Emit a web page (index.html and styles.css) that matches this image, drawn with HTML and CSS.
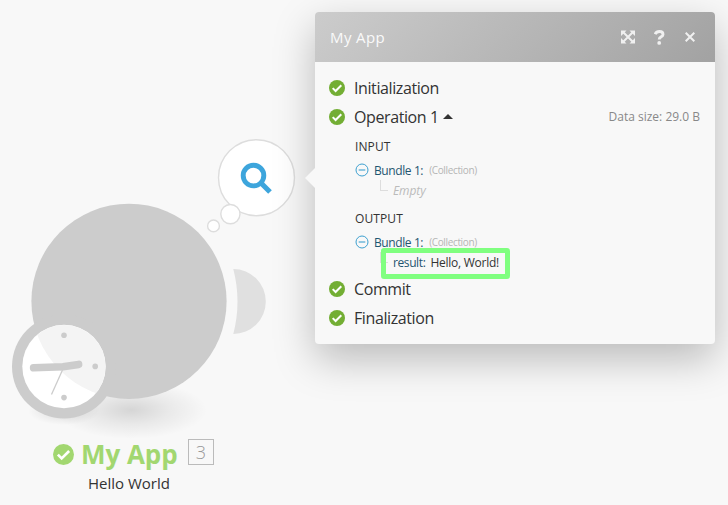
FILE: index.html
```html
<!DOCTYPE html>
<html lang="en">
<head>
<meta charset="utf-8">
<title>My App</title>
<link rel="stylesheet" href="styles.css">
</head>
<body>
<svg class="defs" width="0" height="0" aria-hidden="true">
  <symbol id="check" viewBox="0 0 16 16">
    <circle cx="8" cy="8" r="8" fill="currentColor"/>
    <path d="M3.7 8.1l2.9 2.9 5.7-5.7" fill="none" stroke="#fff" stroke-width="2"/>
  </symbol>
  <symbol id="minus" viewBox="0 0 14 14">
    <circle cx="7" cy="7" r="6" fill="none" stroke="currentColor"/>
    <path d="M3.7 7h6.6" stroke="currentColor" stroke-width="1.1"/>
  </symbol>
</svg>
<main class="canvas">
  <svg class="module" width="315" height="505" viewBox="0 0 315 505">
    <defs>
      <radialGradient id="shade"><stop offset="0" stop-color="#000" stop-opacity=".14"/><stop offset=".5" stop-color="#000" stop-opacity=".06"/><stop offset="1" stop-color="#000" stop-opacity="0"/></radialGradient>
      <clipPath id="face"><circle cx="64" cy="366.5" r="41.5"/></clipPath>
    </defs>
    <ellipse cx="131" cy="410" rx="76" ry="29" fill="url(#shade)"/>
    <ellipse cx="64" cy="411" rx="36" ry="14" fill="url(#shade)"/>
    <path d="M233.3 269A32.5 32.5 0 1 1 233.3 334A130 130 0 0 0 233.3 269Z" fill="#e0e0e0"/>
    <circle cx="129" cy="301.3" r="97.6" fill="#ccc"/>
    <circle cx="64" cy="366.5" r="52" fill="#ccc"/>
    <circle cx="64" cy="366.5" r="41.7" fill="#fff"/>
    <circle cx="129" cy="301.3" r="97.6" fill="#f4f4f4" clip-path="url(#face)"/>
    <g fill="#ccc"><circle cx="64" cy="335.2" r="2.8"/><circle cx="95.2" cy="366.4" r="2.8"/><circle cx="64" cy="397.6" r="2.8"/></g>
    <path d="M33.6 367.8L63 366.7L78.6 364.4" fill="none" stroke="#ccc" stroke-width="7.6" stroke-linecap="round" stroke-linejoin="round"/>
    <path d="M62.5 370L51.5 394.5" stroke="#ccc" stroke-width="1.3"/>
  </svg>
  <svg class="bubble" width="90" height="100" viewBox="206 136 90 100">
    <g fill="#fff" stroke="#ddd" stroke-width="1.4"><circle cx="256.5" cy="177.7" r="38"/><circle cx="230.4" cy="214.1" r="9.6"/><circle cx="213.5" cy="225.9" r="5.9"/></g>
    <circle cx="253.5" cy="175.6" r="10.3" fill="none" stroke="#3da5dc" stroke-width="4.9"/>
    <path d="M261.5 183.5L270 192" stroke="#3da5dc" stroke-width="5.2"/>
  </svg>
  <div class="caption">
    <div class="name"><svg class="name-check"><use href="#check"/></svg><span class="name-text">My App</span><span class="count">3</span></div>
    <div class="subtitle">Hello World</div>
  </div>
  <section class="panel">
    <header class="panel-head">
      <h1 class="title">My App</h1>
      <svg class="tool" width="14" height="14" viewBox="0 0 14 14" fill="#f0f0f0"><path d="M0 .5h5.5L0 6zM14 .5v5.5L8.5 .5zM0 13.5V8L5.5 13.5zM14 13.5H8.5L14 8z"/><path d="M2 2l10 10M12 2L2 12" stroke="#f0f0f0" stroke-width="2"/></svg>
      <svg class="tool help" width="11" height="15" viewBox="0 0 11 15"><path d="M1.2 4.2C2 2.2 3.5 1.5 5.4 1.5C7.8 1.5 9 2.8 9 4.4C9 7 5.2 6.6 5.2 9.6" fill="none" stroke="#f0f0f0" stroke-width="2.9"/><circle cx="5.2" cy="12.9" r="1.9" fill="#f0f0f0"/></svg>
      <svg class="tool" width="10" height="10" viewBox="0 0 10 10"><path d="M.7.7l8.6 8.6M9.3.7L.7 9.3" stroke="#f0f0f0" stroke-width="2"/></svg>
    </header>
    <div class="log">
      <div class="step"><svg class="ok"><use href="#check"/></svg><span class="step-name">Initialization</span></div>
      <div class="step"><svg class="ok"><use href="#check"/></svg><span class="step-name">Operation 1</span><i class="caret"></i><span class="size">Data size: 29.0 B</span></div>
      <div class="io">
        <h2 class="label">INPUT</h2>
        <div class="bundle"><svg class="toggle"><use href="#minus"/></svg><span class="key">Bundle 1:</span><span class="type">(Collection)</span></div>
        <div class="leaf"><em class="empty">Empty</em></div>
        <h2 class="label output">OUTPUT</h2>
        <div class="bundle"><svg class="toggle"><use href="#minus"/></svg><span class="key">Bundle 1:</span><span class="type">(Collection)</span></div>
        <div class="leaf"><span class="result">result:</span><span class="value">Hello, World!</span><div class="highlight"></div></div>
      </div>
      <div class="step"><svg class="ok"><use href="#check"/></svg><span class="step-name">Commit</span></div>
      <div class="step"><svg class="ok"><use href="#check"/></svg><span class="step-name">Finalization</span></div>
    </div>
  </section>
</main>
</body>
</html>
```
FILE: styles.css
```css
* { box-sizing: border-box; }
body { margin: 0; background: #f8f8f8; font-family: "Open Sans", "Noto Sans", sans-serif; color: #333; }
h1, h2 { margin: 0; font-weight: 400; }
.defs { position: absolute; }
.canvas { position: relative; width: 728px; height: 505px; overflow: hidden; background: #f8f8f8; white-space: nowrap; }
.module { position: absolute; left: 0; top: 0; }
.bubble { position: absolute; left: 206px; top: 136px; }
.caption { position: absolute; left: 53px; top: 437px; }
.name { display: flex; align-items: center; height: 34px; color: #a2d770; }
.name-check { width: 21px; height: 21px; margin: 1px 7px 0 0; }
.name-text { width: 107px; font-size: 26px; font-weight: 700; letter-spacing: -.05px; }
.count { width: 26px; height: 26px; margin-top: -4px; border: 1px solid #bbb; color: #999; font-size: 18px; font-weight: 300; line-height: 24px; text-align: center; }
.subtitle { margin-left: 35px; font-size: 15px; line-height: 22px; margin-top: 1px; }
.panel { position: absolute; left: 315px; top: 12px; width: 400px; height: 332px; border-radius: 4px; background: #f8f8f8; box-shadow: 0 15px 40px rgba(0,0,0,.25); }
.panel::before { content: ""; position: absolute; left: -10px; top: 156px; border: solid transparent; border-width: 10px 10px 10px 0; border-right-color: #f8f8f8; }
.panel-head { display: flex; align-items: center; height: 50px; padding: 0 20px 0 15px; border-radius: 4px 4px 0 0; background: linear-gradient(135deg, #ccc, #a2a2a2); }
.title { margin-right: auto; font-size: 15px; font-weight: 500; letter-spacing: .4px; color: #fafafa; }
.help { margin: 0 20px 0 19px; }
.log { padding: 11px 15px 0 14px; }
.step { display: flex; align-items: center; height: 29px; font-size: 16px; }
.ok { width: 16px; height: 16px; margin-right: 9px; color: #73ae34; }
.step-name { letter-spacing: -.4px; }
.caret { margin: 0 0 0 4px; border: solid transparent; border-width: 0 5px 5px; border-bottom-color: #333; }
.size { margin-left: auto; font-size: 12px; color: #888; }
.io { padding: 1px 0 0 26px; height: 143px; }
.label { height: 28px; line-height: 30px; font-size: 12px; letter-spacing: .1px; }
.output { height: 32px; line-height: 38px; }
.bundle { display: flex; align-items: center; height: 20px; font-size: 12px; }
.toggle { width: 14px; height: 14px; margin-right: 5px; color: #3da0d0; }
.key, .result { color: #1f5570; letter-spacing: -.4px; }
.type { margin-left: 6px; font-size: 10px; letter-spacing: -.35px; color: #b5b5b5; }
.leaf { position: relative; display: flex; align-items: center; height: 20px; padding-left: 38px; font-size: 12px; }
.leaf::before { content: ""; position: absolute; left: 25px; top: 0; width: 7px; height: 10px; border: solid #ddd; border-width: 0 0 1px 1px; }
.empty { color: #bbb; letter-spacing: -.1px; }
.value { margin-left: 5px; letter-spacing: -.25px; }
.highlight { position: absolute; left: 26px; top: -4px; width: 129px; height: 31px; border: 5px solid #80ff80; border-radius: 3px; }
```
